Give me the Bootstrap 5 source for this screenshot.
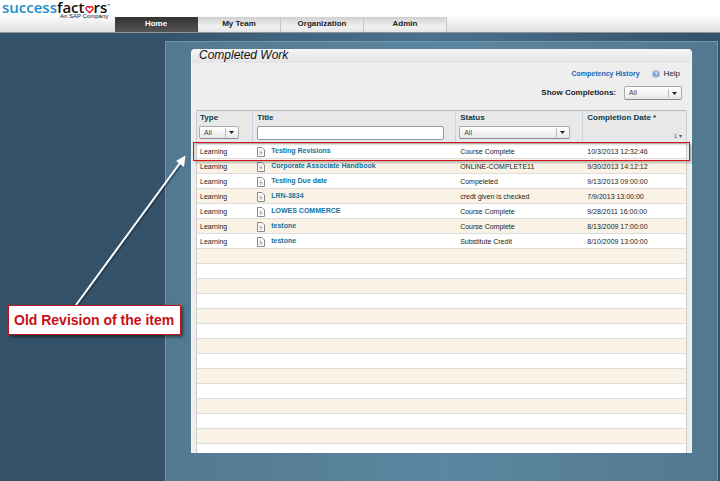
<!DOCTYPE html>
<html lang="en">
<head>
<meta charset="utf-8">
<meta name="viewport" content="width=device-width, initial-scale=1">
<title>Completed Work</title>
<link href="https://cdn.jsdelivr.net/npm/bootstrap@5.3.0/dist/css/bootstrap.min.css" rel="stylesheet">
<style>
body{font-family:"Liberation Sans",Arial,sans-serif;font-size:7px;line-height:10px;color:#222;min-height:100vh;background-color:#2d4d66;
background-image:repeating-conic-gradient(rgba(255,255,255,.07) 0 25%,rgba(0,0,0,.05) 0 50%),linear-gradient(90deg,#2d4d66 22%,#3b607c 38%,#486f8d 60%,#2d4d66 100%);background-size:2px 2px,100% 100%}
a{text-decoration:none}
.top-bar{height:33px;background:linear-gradient(#fff 14px,#dfdfdf 32px);border-bottom:1px solid #8e9499}
.brand-logo{width:115px;font-family:"Open Sans",sans-serif;color:#111}
.brand-word{font-size:15px;font-weight:600;padding-left:2px;height:12px;line-height:11px;white-space:nowrap}
.brand-word .blue{color:#1b8dcc}
.brand-word svg{width:9px;height:9px;vertical-align:-1px}
.brand-word small{font-size:4px;vertical-align:6px}
.brand-sub{font-family:"Liberation Sans",sans-serif;font-size:6px;line-height:8px;padding-left:60px;white-space:nowrap}
.main-tabs{margin-top:17px;height:15px}
.main-tabs .nav-link{width:83px;height:15px;padding:0;line-height:14px;font-size:8px;font-weight:700;color:#222;text-align:center;background:linear-gradient(#cfcfcf,#f1f1f1 60%,#e6e6e6);border-right:1px solid #c8c8c8;border-radius:0}
.main-tabs .nav-link.active{color:#fff;background:linear-gradient(#333,#555);border-color:#444}
.stage{margin:8px 2px 0 165px;padding:7px 25px 28px;border:solid #7095ac;border-width:1px 1px 0;background-color:#527b95;
background-image:repeating-conic-gradient(rgba(255,255,255,.05) 0 25%,rgba(0,0,0,.05) 0 50%),linear-gradient(90deg,#4f7891,#5a87a2 50%,#4f7891);background-size:2px 2px,100% 100%}
.work-panel{background:#eee;border-radius:4px 4px 0 0;padding:0 4px;border:1px solid #f7f7f7;border-width:0 1px}
.panel-title{font-size:12px;line-height:13px;height:14px;font-style:italic;font-weight:400;color:#111;margin:0 -4px;padding-left:7px;background:linear-gradient(#f5f5f5,#e3e3e3);border-radius:4px 4px 0 0}
.tool-links{padding:1px 7px 0 0;height:20px}
.tool-links a{line-height:12px}
.history{font-weight:700;color:#2168b8}
.help{font-size:8px;color:#222}
.filter-line{height:27px;padding:3px 5px 0 0;font-size:8px;line-height:14px;font-weight:700}
.pick{display:block;appearance:none;height:13px;padding:0 4px;border:1px solid #aaa;border-bottom-color:#888;border-radius:2px;font-size:7px;line-height:10px;color:#444;
background:url("data:image/svg+xml,%3Csvg xmlns='http://www.w3.org/2000/svg' width='13' height='11'%3E%3Cpath d='M.5 1v9' stroke='%23bbb'/%3E%3Cpath d='M4 4h5L6.500 7z' fill='%23222'/%3E%3C/svg%3E") right center no-repeat,linear-gradient(#fff,#e8e8e8)}
.pick-type{width:40px}.pick-status{width:111px}.pick-show{width:58px;height:14px}
.find{display:block;width:187px;height:14px;border:1px solid #999;border-radius:2px;padding:0 3px;font-size:7px;background:#fff}
.grid-wrap{position:relative}
.work-table{table-layout:fixed;width:100%;border:1px solid #ccc;border-width:0 1px;border-collapse:separate;border-spacing:0}
.work-table th{height:34px;padding:1px 4px 0;vertical-align:top;font-size:8px;line-height:12px;color:#0d3a4a;background:#e8e8e8;border-top:1px solid #bbb;border-right:1px solid #c6d4e4;border-bottom:1px solid #ccc}
.work-table th:last-child{border-right:0}
.work-table th .pick,.work-table th .find{margin-top:2px}
.work-table th .pick{margin-left:-1px}
.work-table td{height:15px;padding:2px 4px 0;line-height:12px;vertical-align:top;border-bottom:1px solid #ddd;background:#fff;white-space:nowrap}
.work-table th:first-child,.work-table td:first-child{padding-left:3px}
.work-table tr:nth-child(even) td{background:#faf3e5}
.work-table tr:last-child td{height:9px;border:0}
.work-table td a{color:#1173a0;font-weight:700;line-height:11px}
.work-table td.name-cell{padding-top:1px}
.doc{width:8px;height:10px;margin:2px 6px 0 0}
.order{font-size:6px;font-weight:400;text-align:right;color:#555;margin-top:8px;line-height:8px}
.marker{position:absolute;left:-3px;right:-3px;top:32px;height:19px;border:1px solid #d01818;box-shadow:2px 2px 2px rgba(0,0,0,.25),inset 1px 2px 2px rgba(0,0,0,.15)}
.note{position:absolute;left:8px;top:305px;padding:0 6px 0 5px;background:#fff;border:1px solid #c4141b;color:#c80f16;font-size:14px;line-height:28px;font-weight:700;box-shadow:2px 2px 3px rgba(0,0,0,.5);white-space:nowrap}
.pointer{position:absolute;left:60px;top:145px;width:140px;height:165px;pointer-events:none}
</style>
</head>
<body class="position-relative">
<header class="top-bar d-flex">
  <div class="brand-logo flex-shrink-0">
    <div class="brand-word"><span class="blue">success</span>fact<svg viewBox="0 0 10 9" aria-hidden="true"><path d="M5 8 1.500 4.500C-.2 2.200 2.800-.2 5 2.500 7.200-.2 10.200 2.200 8.500 4.500Z" fill="#fff" stroke="#d9203a" stroke-width="1.600"/></svg>rs<small>™</small></div>
    <div class="brand-sub">An SAP Company</div>
  </div>
  <nav class="nav main-tabs flex-nowrap">
    <a class="nav-link active" href="#">Home</a><a class="nav-link" href="#">My Team</a><a class="nav-link" href="#">Organization</a><a class="nav-link" href="#">Admin</a>
  </nav>
</header>
<main class="stage">
  <section class="work-panel">
    <h1 class="panel-title">Completed Work</h1>
    <div class="tool-links d-flex justify-content-end align-items-center">
      <a class="history me-2 pe-1" href="#">Competency History</a>
      <a class="help d-flex align-items-center" href="#"><svg class="me-1" width="8" height="8" viewBox="0 0 8 8" aria-hidden="true"><circle cx="4" cy="4" r="3.600" fill="#76a3d4" stroke="#b0c4dc" stroke-width=".8"/><path d="M2.800 3.200C2.800 1.500 5.400 1.700 5.200 3.100 5.100 3.800 4 3.900 4 4.900M4 5.700v.9" fill="none" stroke="#fff"/></svg>Help</a>
    </div>
    <div class="filter-line d-flex justify-content-end">
      <label class="me-2" for="show">Show Completions:</label>
      <select id="show" class="pick pick-show"><option>All</option></select>
    </div>
    <div class="grid-wrap">
      <table class="work-table">
        <colgroup><col style="width:11.500%"><col style="width:41.500%"><col style="width:26%"><col style="width:21%"></colgroup>
        <thead><tr>
          <th scope="col"><label class="d-block" for="type">Type</label><select id="type" class="pick pick-type"><option>All</option></select></th>
          <th scope="col"><label class="d-block" for="title">Title</label><input id="title" class="find" type="text"></th>
          <th scope="col"><label class="d-block" for="status">Status</label><select id="status" class="pick pick-status"><option>All</option></select></th>
          <th scope="col">Completion Date *<div class="order">1 ▾</div></th>
        </tr></thead>
        <tbody id="rows"></tbody>
      </table>
      <div class="marker"></div>
    </div>
  </section>
</main>
<svg class="pointer" viewBox="0 0 140 165" aria-hidden="true"><path d="M18 161 121 20" stroke="#142b3d" stroke-opacity=".5" stroke-width="2"/><path d="M16 160 120 18" stroke="#fff" stroke-width="2"/><path d="M125.500 10.500 124 22 116 16Z" fill="#fff"/></svg>
<div class="note">Old Revision of the item</div>
<script src="https://cdn.jsdelivr.net/npm/bootstrap@5.3.0/dist/js/bootstrap.bundle.min.js"></script>
<script>
const work=[["Testing Revisions","Course Complete","10/3/2013 12:32:46"],["Corporate Associate Handbook","ONLINE-COMPLETE11","9/30/2013 14:12:12"],["Testing Due date","Compeleted","9/13/2013 09:00:00"],["LRN-3834","credt given is checked","7/9/2013 13:00:00"],["LOWES COMMERCE","Course Complete","9/28/2011 16:00:00"],["testone","Course Complete","8/13/2009 17:00:00"],["testone","Substitute Credit","8/10/2009 13:00:00"]];
const icon='<svg class="doc" viewBox="0 0 8 10" aria-hidden="true"><path d="M.5.5h4.500l2.500 2.500v6.500h-7z" fill="#fff" stroke="#888"/><path d="M2.500 4h2M2.500 5.500h3M2.500 7h3" stroke="#999" stroke-width=".8"/></svg>';
let html="";
for(let i=0;i<21;i++){const w=work[i];html+=w?`<tr><td>Learning</td><td class="name-cell"><div class="d-flex">${icon}<a href="#">${w[0]}</a></div></td><td>${w[1]}</td><td>${w[2]}</td></tr>`:"<tr><td></td><td></td><td></td><td></td></tr>";}
document.getElementById("rows").innerHTML=html;
</script>
</body>
</html>
